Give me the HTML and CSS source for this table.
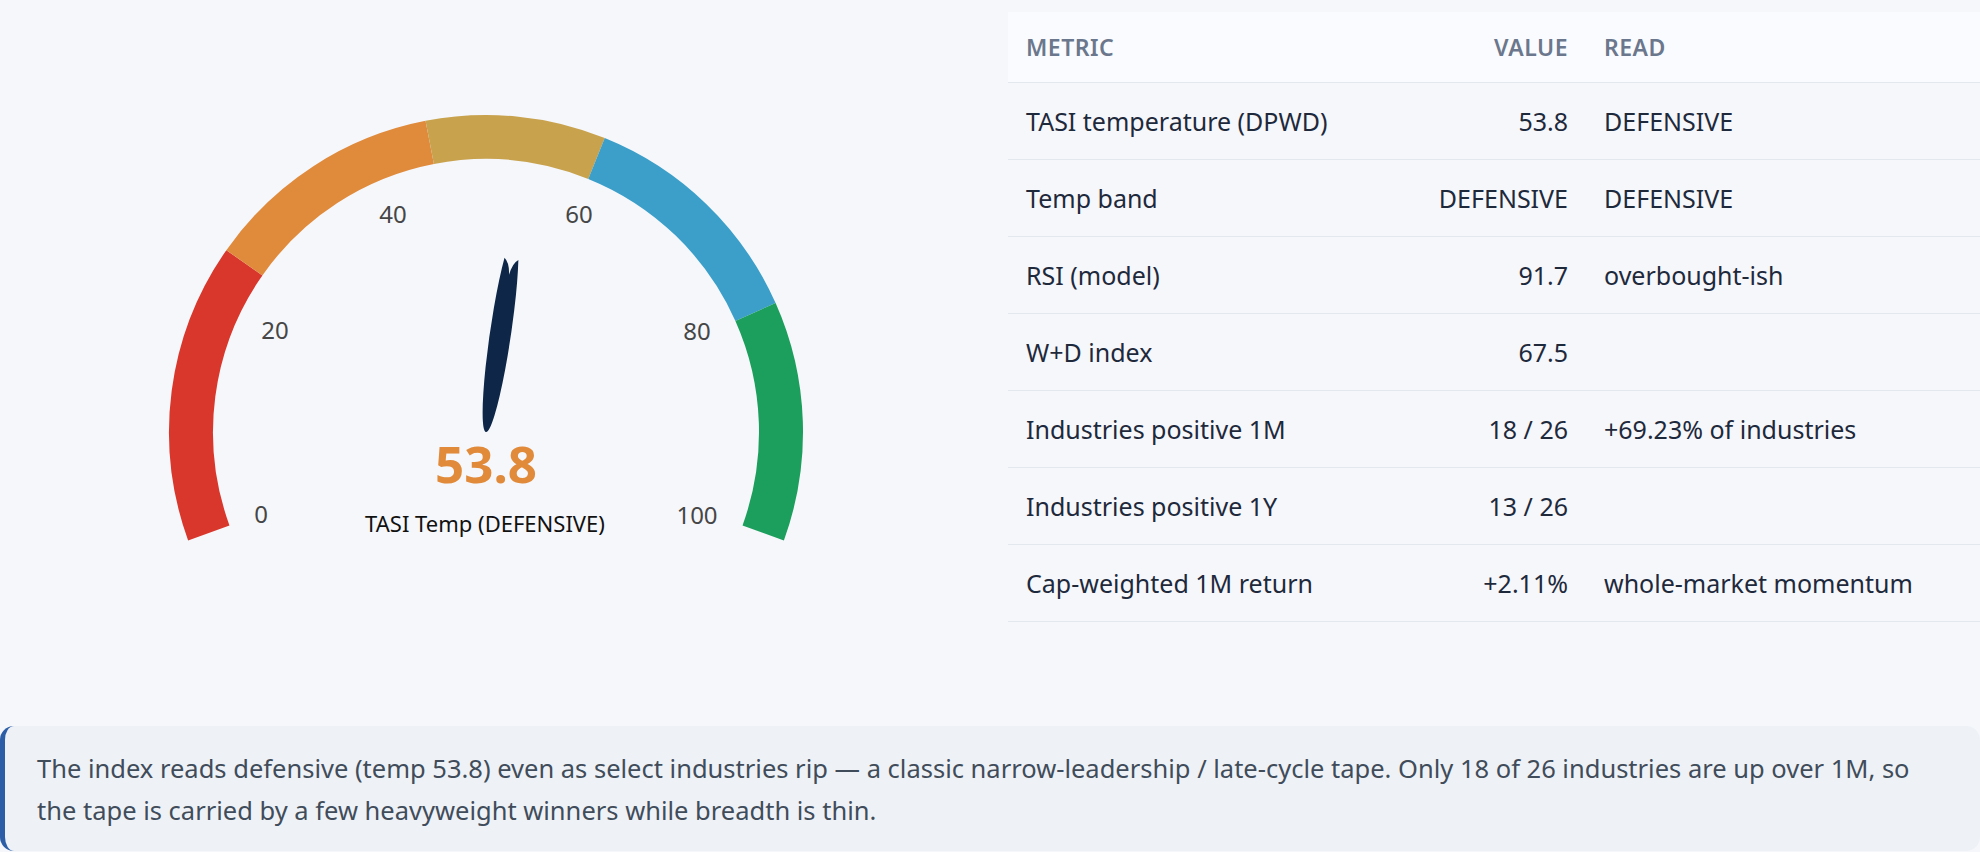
FILE: index.html
```html
<!DOCTYPE html>
<html lang="en">
<head>
<meta charset="utf-8">
<title>TASI Temperature</title>
<link rel="stylesheet" href="styles.css">
</head>
<body>
<div class="top">
  <div class="gauge-col">
    <svg class="gauge" viewBox="0 0 972 700" width="972" height="700" xmlns="http://www.w3.org/2000/svg">
      <g fill="none" stroke-width="44">
        <path d="M208.79 532.90 A295 295 0 0 1 244.35 262.79" stroke="#d9372c"/>
        <path d="M244.35 262.79 A295 295 0 0 1 429.71 142.42" stroke="#e08a3c"/>
        <path d="M429.71 142.42 A295 295 0 0 1 596.51 158.48" stroke="#c8a24d"/>
        <path d="M596.51 158.48 A295 295 0 0 1 755.50 312.01" stroke="#3b9fc9"/>
        <path d="M755.50 312.01 A295 295 0 0 1 763.21 532.90" stroke="#1c9f5c"/>
      </g>
      <g class="tick-labels" text-anchor="middle" dominant-baseline="central">
        <text x="261" y="513">0</text>
        <text x="275" y="329">20</text>
        <text x="393" y="213">40</text>
        <text x="579" y="213">60</text>
        <text x="697" y="330">80</text>
        <text x="697" y="514">100</text>
      </g>
      <path class="needle" transform="translate(486 432) rotate(8.36)" d="M0 0 A10.5 100 0 0 1 -7 -175 Q -1.5 -171 0 -159 Q 1.5 -171 7 -175 A10.5 100 0 0 1 0 0 Z"/>
      <text class="gauge-value" x="486" y="483" text-anchor="middle">53.8</text>
      <text class="gauge-title" x="485" y="532" text-anchor="middle">TASI Temp (DEFENSIVE)</text>
    </svg>
  </div>
  <div class="table-col">
    <table class="metrics">
      <colgroup>
        <col class="c-metric">
        <col class="c-value">
        <col class="c-read">
      </colgroup>
      <thead>
        <tr><th>Metric</th><th class="num">Value</th><th>Read</th></tr>
      </thead>
      <tbody>
        <tr><td>TASI temperature (DPWD)</td><td class="num">53.8</td><td>DEFENSIVE</td></tr>
        <tr><td>Temp band</td><td class="num">DEFENSIVE</td><td>DEFENSIVE</td></tr>
        <tr><td>RSI (model)</td><td class="num">91.7</td><td>overbought-ish</td></tr>
        <tr><td>W+D index</td><td class="num">67.5</td><td></td></tr>
        <tr><td>Industries positive 1M</td><td class="num">18 / 26</td><td>+69.23% of industries</td></tr>
        <tr><td>Industries positive 1Y</td><td class="num">13 / 26</td><td></td></tr>
        <tr><td>Cap-weighted 1M return</td><td class="num">+2.11%</td><td>whole-market momentum</td></tr>
      </tbody>
    </table>
  </div>
</div>
<div class="note">
  <p>The index reads defensive (temp 53.8) even as select industries rip — a classic narrow-leadership / late-cycle tape. Only 18 of 26 industries are up over 1M, so the tape is carried by a few heavyweight winners while breadth is thin.</p>
</div>
</body>
</html>
```
FILE: styles.css
```css
html, body {
  margin: 0;
  padding: 0;
  background: #f5f7fb;
  font-family: "Noto Sans", "Open Sans", "DejaVu Sans", sans-serif;
  color: #1e293b;
}

.top {
  display: grid;
  grid-template-columns: 972px 972px;
  column-gap: 36px;
}

.gauge-col {
  height: 700px;
}

.gauge {
  display: block;
}

.tick-labels text {
  font-family: "Noto Sans", "Open Sans", sans-serif;
  font-size: 24px;
  fill: #464646;
}

.needle {
  fill: #0e2748;
}

.gauge-value {
  font-family: "Noto Sans", "Open Sans", sans-serif;
  font-size: 51px;
  font-weight: 700;
  fill: #e08a3a;
}

.gauge-title {
  font-family: "Noto Sans", "Open Sans", sans-serif;
  font-size: 22px;
  fill: #111111;
}

.table-col {
  padding-top: 12px;
}

.metrics {
  width: 972px;
  border-collapse: collapse;
  table-layout: fixed;
  font-size: 25px;
}

.c-metric { width: 400px; }
.c-value { width: 178px; }
.c-read { width: auto; }

.metrics th,
.metrics td {
  text-align: left;
  padding: 20px 18px;
  line-height: 36px;
  border-bottom: 1px solid #e3e8ef;
  white-space: nowrap;
}

.metrics thead th {
  background: #fafbfe;
  color: #6b778c;
  font-size: 23px;
  font-weight: 600;
  text-transform: uppercase;
  letter-spacing: 0.5px;
  line-height: 32px;
  padding-top: 19px;
  padding-bottom: 19px;
}

.metrics td {
  color: #1e293b;
}

.metrics .num {
  text-align: right;
}

.note {
  margin-top: 26px;
  background: #eef2f7;
  border-left: 5px solid #2c5ea8;
  border-radius: 14px;
  padding: 21px 60px 20px 32px;
}

.note p {
  margin: 0;
  font-size: 25.5px;
  line-height: 42px;
  color: #414c5a;
}
```
